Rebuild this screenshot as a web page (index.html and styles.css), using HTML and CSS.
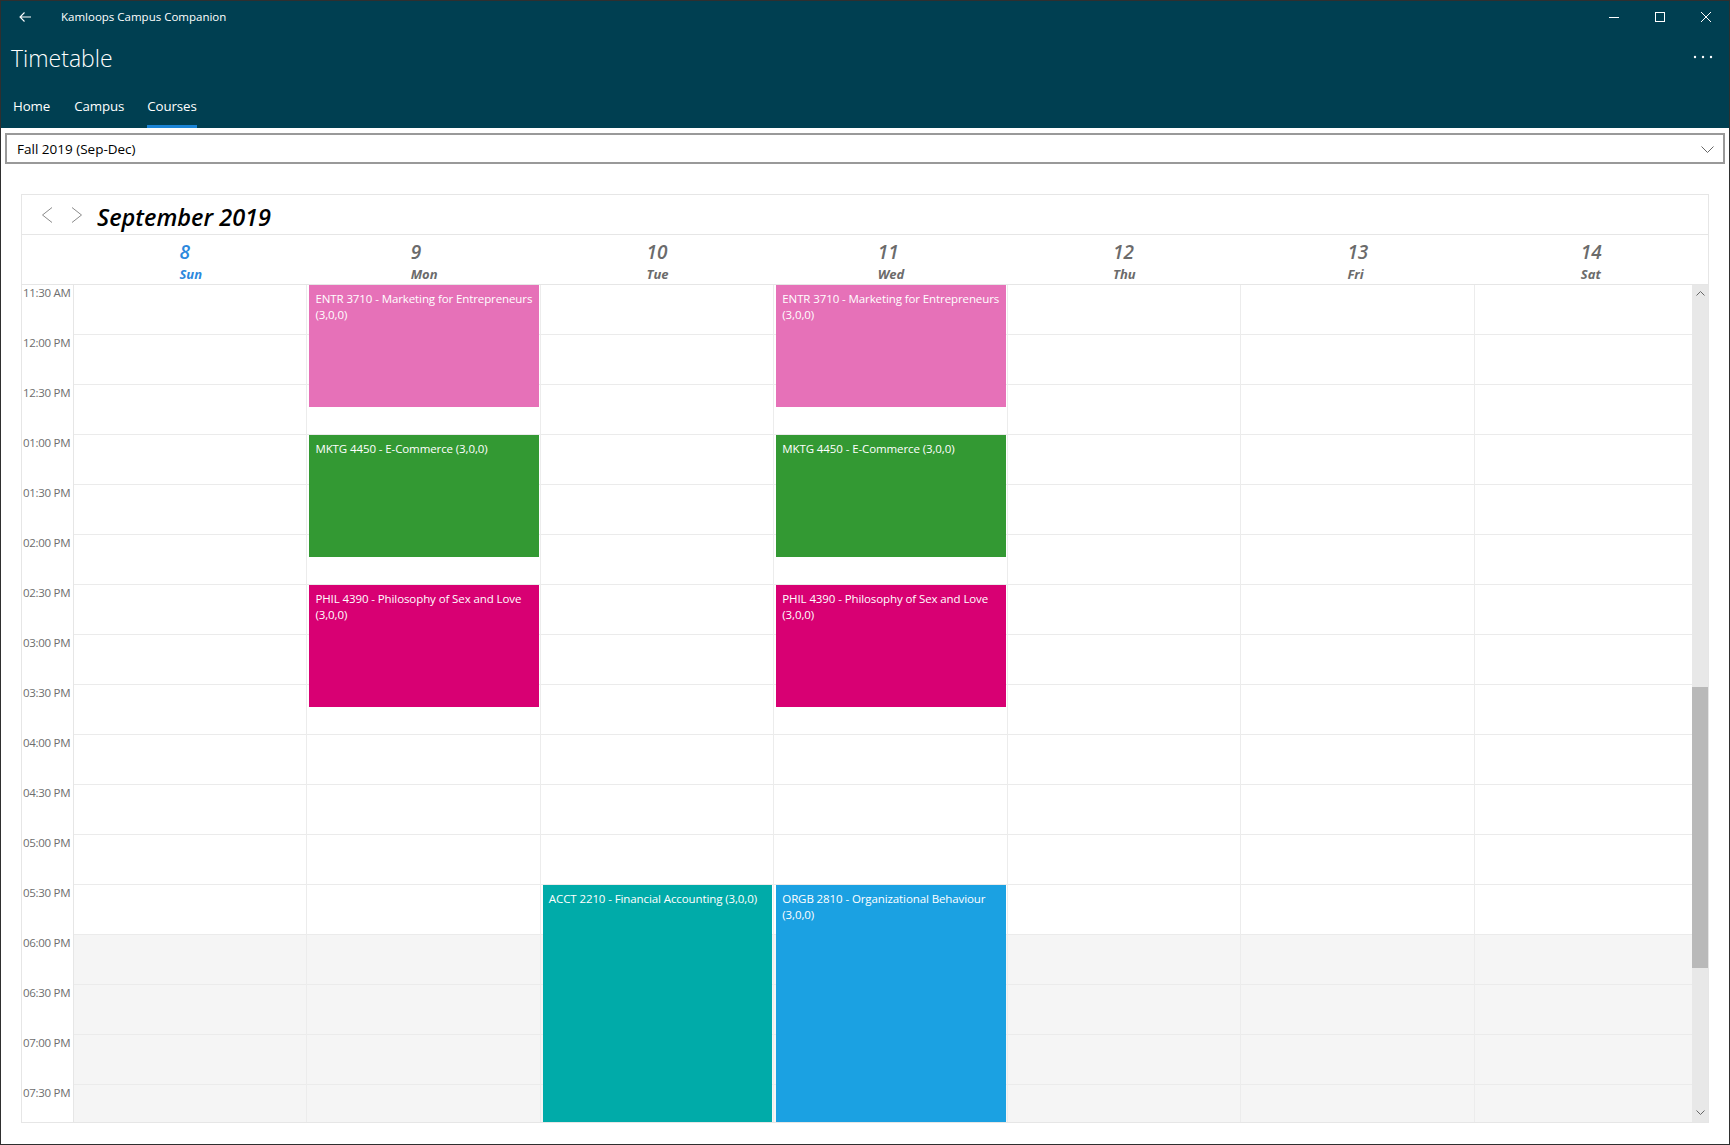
FILE: index.html
```html
<!DOCTYPE html>
<html lang="en">
<head>
  <meta charset="UTF-8">
  <title>Kamloops Campus Companion - Timetable</title>
  <link rel="stylesheet" href="styles.css">
</head>
<body>
  <div class="window">
    <!-- app bar: title bar, page title and pivot -->
    <header class="app-bar">
      <div class="title-bar">
        <button class="back-btn" aria-label="Back">
          <svg width="12" height="10" viewBox="0 0 12 10"><path d="M12 5H1M5.5 0.5L1 5l4.5 4.5" fill="none" stroke="#fff" stroke-width="1.1"/></svg>
        </button>
        <span class="app-name">Kamloops Campus Companion</span>
        <div class="win-controls">
          <span class="win-btn"><svg width="10" height="10" viewBox="0 0 10 10"><path d="M0 5.5h10" stroke="#fff" stroke-width="1"/></svg></span>
          <span class="win-btn"><svg width="10" height="10" viewBox="0 0 10 10"><rect x="0.5" y="0.5" width="9" height="9" fill="none" stroke="#fff" stroke-width="1"/></svg></span>
          <span class="win-btn"><svg width="10" height="10" viewBox="0 0 10 10"><path d="M0 0l10 10M10 0L0 10" stroke="#fff" stroke-width="1"/></svg></span>
        </div>
      </div>
      <div class="page-title-row">
        <h1 class="page-title">Timetable</h1>
        <span class="more-btn">
          <svg width="20" height="4" viewBox="0 0 20 4"><circle cx="2" cy="2" r="1.2" fill="#fff"/><circle cx="10" cy="2" r="1.2" fill="#fff"/><circle cx="18" cy="2" r="1.2" fill="#fff"/></svg>
        </span>
      </div>
      <nav class="pivot">
        <a class="pivot-item">Home</a>
        <a class="pivot-item">Campus</a>
        <a class="pivot-item active">Courses</a>
      </nav>
    </header>

    <!-- term picker -->
    <div class="term-select">
      <span>Fall 2019 (Sep-Dec)</span>
      <svg width="13" height="7" viewBox="0 0 13 7"><path d="M0.5 0.5l6 6 6-6" fill="none" stroke="#666" stroke-width="1"/></svg>
    </div>

    <!-- week calendar -->
    <section class="calendar">
      <div class="cal-head">
        <svg class="nav-arrow" width="12" height="16" viewBox="0 0 12 16"><path d="M11 0.5L1.5 8 11 15.5" fill="none" stroke="#8a8a8a" stroke-width="1"/></svg>
        <svg class="nav-arrow" width="12" height="16" viewBox="0 0 12 16"><path d="M1 0.5L10.5 8 1 15.5" fill="none" stroke="#8a8a8a" stroke-width="1"/></svg>
        <h2 class="month-title">September 2019</h2>
      </div>

      <div class="cal-days">
        <div class="corner"></div>
        <div class="day-head today"><div><span class="day-num">8</span><span class="day-name">Sun</span></div></div>
        <div class="day-head"><div><span class="day-num">9</span><span class="day-name">Mon</span></div></div>
        <div class="day-head"><div><span class="day-num">10</span><span class="day-name">Tue</span></div></div>
        <div class="day-head"><div><span class="day-num">11</span><span class="day-name">Wed</span></div></div>
        <div class="day-head"><div><span class="day-num">12</span><span class="day-name">Thu</span></div></div>
        <div class="day-head"><div><span class="day-num">13</span><span class="day-name">Fri</span></div></div>
        <div class="day-head"><div><span class="day-num">14</span><span class="day-name">Sat</span></div></div>
      </div>

      <div class="cal-body">
        <div class="time-col">
          <span class="time-label">11:30 AM</span>
          <span class="time-label">12:00 PM</span>
          <span class="time-label">12:30 PM</span>
          <span class="time-label">01:00 PM</span>
          <span class="time-label">01:30 PM</span>
          <span class="time-label">02:00 PM</span>
          <span class="time-label">02:30 PM</span>
          <span class="time-label">03:00 PM</span>
          <span class="time-label">03:30 PM</span>
          <span class="time-label">04:00 PM</span>
          <span class="time-label">04:30 PM</span>
          <span class="time-label">05:00 PM</span>
          <span class="time-label">05:30 PM</span>
          <span class="time-label">06:00 PM</span>
          <span class="time-label">06:30 PM</span>
          <span class="time-label">07:00 PM</span>
          <span class="time-label">07:30 PM</span>
        </div>

        <div class="day-col sun"></div>
        <div class="day-col mon"></div>
        <div class="day-col tue"></div>
        <div class="day-col wed"></div>
        <div class="day-col thu"></div>
        <div class="day-col fri"></div>
        <div class="day-col sat"></div>

        <!-- Mon -->
        <div class="event pink mon slot-1130">ENTR 3710 - Marketing for Entrepreneurs (3,0,0)</div>
        <div class="event green mon slot-0100">MKTG 4450 - E-Commerce (3,0,0)</div>
        <div class="event magenta mon slot-0230">PHIL 4390 - Philosophy of Sex and Love (3,0,0)</div>
        <!-- Tue -->
        <div class="event teal tue slot-0530">ACCT 2210 - Financial Accounting (3,0,0)</div>
        <!-- Wed -->
        <div class="event pink wed slot-1130">ENTR 3710 - Marketing for Entrepreneurs (3,0,0)</div>
        <div class="event green wed slot-0100">MKTG 4450 - E-Commerce (3,0,0)</div>
        <div class="event magenta wed slot-0230">PHIL 4390 - Philosophy of Sex and Love (3,0,0)</div>
        <div class="event cyan wed slot-0530">ORGB 2810 - Organizational Behaviour (3,0,0)</div>

        <!-- vertical scrollbar -->
        <div class="scrollbar">
          <svg class="sb-arrow" width="9" height="5" viewBox="0 0 9 5"><path d="M0.5 4.5l4-4 4 4" fill="none" stroke="#666" stroke-width="1"/></svg>
          <div class="sb-thumb"></div>
          <svg class="sb-arrow down" width="9" height="5" viewBox="0 0 9 5"><path d="M0.5 0.5l4 4 4-4" fill="none" stroke="#666" stroke-width="1"/></svg>
        </div>
      </div>
    </section>
  </div>
</body>
</html>
```

FILE: styles.css
```css
* {
  box-sizing: border-box;
}
body {
  margin: 0;
  font-family: "Segoe UI", "Open Sans", "Noto Sans", sans-serif;
  background: #fff;
}
/* whole app window with its thin dark frame */
.window {
  width: 1730px;
  height: 1145px;
  border: 1px solid #2f2f2f;
  overflow: hidden;
  display: flex;
  flex-direction: column;
}

/* ---------- app bar ---------- */
.app-bar {
  background: #003f51;
  color: #fff;
  height: 127px;
  flex: none;
}
.title-bar {
  height: 32px;
  display: flex;
  align-items: center;
}
.back-btn {
  width: 48px;
  height: 32px;
  border: 0;
  background: transparent;
  padding: 0;
  display: flex;
  align-items: center;
  justify-content: center;
}
.app-name {
  margin-left: 12px;
  font-size: 11.5px;
  padding-bottom: 2px;
}
.win-controls {
  margin-left: auto;
  display: flex;
}
.win-btn {
  width: 46px;
  height: 32px;
  display: flex;
  align-items: center;
  justify-content: center;
}
.page-title-row {
  height: 51px;
  display: flex;
  align-items: center;
  justify-content: space-between;
}
.page-title {
  margin: 0 0 0 10px;
  font-size: 23px;
  font-weight: 300;
  line-height: 51px;
}
.more-btn {
  width: 48px;
  height: 51px;
  display: flex;
  align-items: center;
  justify-content: center;
  padding-bottom: 4px;
  margin-right: 2px;
}
.pivot {
  height: 44px;
  display: flex;
}
.pivot-item {
  padding: 4px 12px 0;
  font-size: 13.3px;
  letter-spacing: -0.1px;
  line-height: 36px;
  height: 44px;
}
.pivot-item.active {
  padding: 4px 0 0;
  margin: 0 12px 0 11px;
  border-bottom: 3px solid #1a84d6;
}

/* ---------- term select ---------- */
.term-select {
  margin: 5px 4px 0 4px;
  height: 31px;
  border: 2px solid #999;
  display: flex;
  align-items: center;
  justify-content: space-between;
  padding: 1px 9px 0 10px;
  font-size: 13.5px;
  color: #000;
  flex: none;
}

/* ---------- calendar ---------- */
.calendar {
  margin: 30px 20px 0 20px;
  border: 1px solid #e6e6e6;
  flex: none;
}
.cal-head {
  height: 40px;
  border-bottom: 1px solid #e6e6e6;
  display: flex;
  align-items: center;
  padding-left: 19px;
}
.nav-arrow {
  margin-right: 18px;
}
.nav-arrow + .nav-arrow {
  margin-right: 14px;
}
.month-title {
  margin: 0;
  font-size: 23.5px;
  font-weight: 600;
  font-style: italic;
  color: #000;
  padding-top: 5px;
}
.cal-days {
  display: grid;
  grid-template-columns: 52px repeat(7, 1fr);
  height: 50px;
  border-bottom: 1px solid #e6e6e6;
}
.day-head {
  display: flex;
  justify-content: center;
  padding-top: 5px;
  color: #6b6b6b;
}
.day-head > div {
  display: flex;
  flex-direction: column;
  align-items: flex-start;
}
.day-head.today {
  color: #2b88dd;
}
.day-num {
  font-size: 19px;
  font-weight: 600;
  font-style: italic;
  line-height: 25px;
}
.day-name {
  font-size: 13px;
  font-weight: 700;
  font-style: italic;
  line-height: 18px;
}

/* body grid: 15 minute rows of 25px */
.cal-body {
  position: relative;
  height: 837px;
  overflow: hidden;
  display: grid;
  grid-template-columns: 52px repeat(7, 1fr);
  grid-template-rows: repeat(34, 25px);
}
.time-col {
  grid-column: 1;
  grid-row: 1 / -1;
  border-right: 1px solid #e6e6e6;
  display: flex;
  flex-direction: column;
}
.time-label {
  height: 50px;
  flex: none;
  font-size: 11.5px;
  color: #6e6e6e;
  padding: 0 0 0 1px;
  white-space: nowrap;
  letter-spacing: -0.3px;
}
.day-col {
  grid-row: 1 / -1;
  border-right: 1px solid #ececec;
  background:
    repeating-linear-gradient(to bottom, transparent 0 49px, #ebebeb 49px 50px),
    linear-gradient(to bottom, #fff 0 649px, #f5f5f5 649px);
}
.sun { grid-column: 2; }
.mon { grid-column: 3; }
.tue { grid-column: 4; }
.wed { grid-column: 5; }
.thu { grid-column: 6; }
.fri { grid-column: 7; }
.sat { grid-column: 8; }

.event {
  margin: 0 2px 3px 2px;
  padding: 6px 6px;
  color: #fff;
  font-size: 11.5px;
  line-height: 16px;
  letter-spacing: -0.1px;
  overflow: hidden;
}
.slot-1130 { grid-row: 1 / span 5; }
.slot-0100 { grid-row: 7 / span 5; }
.slot-0230 { grid-row: 13 / span 5; }
.slot-0530 { grid-row: 25 / -1; margin-bottom: 0; }

.pink { background: #e671b8; }
.green { background: #339933; }
.magenta { background: #d80073; }
.teal { background: #00aba9; }
.cyan { background: #1ba1e2; }

/* scrollbar sits over the Saturday column */
.scrollbar {
  position: absolute;
  top: 0;
  right: 0;
  bottom: 0;
  width: 16px;
  background: #e8e8e8;
}
.sb-arrow {
  position: absolute;
  left: 4px;
  top: 6px;
}
.sb-arrow.down {
  top: auto;
  bottom: 7px;
}
.sb-thumb {
  position: absolute;
  top: 402px;
  left: 0;
  width: 16px;
  height: 281px;
  background: #b9b9b9;
}
```
